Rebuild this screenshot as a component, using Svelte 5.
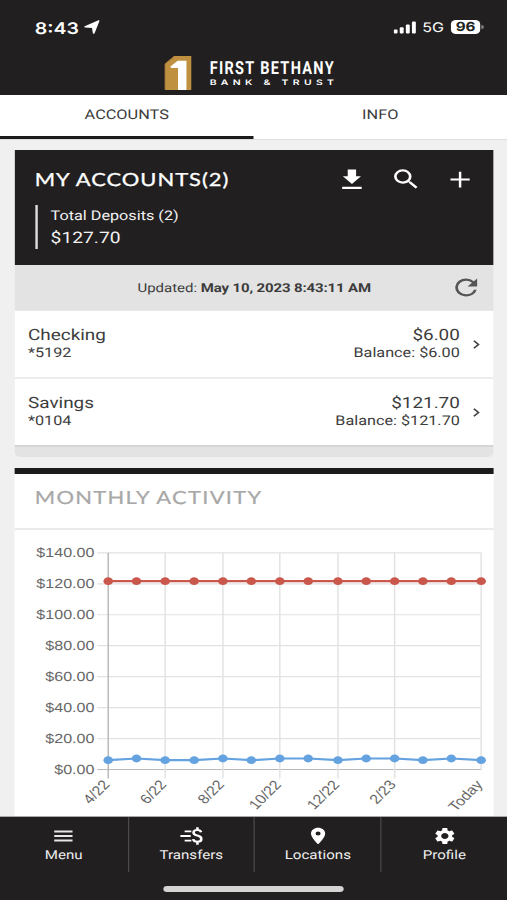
<script>
  const tabs = ['ACCOUNTS', 'INFO'];
  const accounts = [
    { name: 'Checking', mask: '*5192', amount: '$6.00' },
    { name: 'Savings', mask: '*0104', amount: '$121.70' }
  ];

  // Chart geometry, in the units of the chart's viewBox.
  const left = 76.8;
  const right = 382.8;
  const base = 239.5;
  const step = 30.95;
  const ticks = [0, 20, 40, 60, 80, 100, 120, 140];
  const xs = [76.8, 100, 123.5, 147.3, 170.9, 194.2, 217.6, 240.9, 265.3, 288.5, 311.8, 335, 358.3, 382.8];
  const labels = [
    [0, '4/22'], [2, '6/22'], [4, '8/22'], [6, '10/22'], [8, '12/22'], [10, '2/23'], [13, 'Today']
  ];
  const y = (v) => base - (v / 20) * step;
  const savings = xs.map(() => 121.7);
  const checking = [6, 7.1, 6, 6, 7.1, 6, 7.1, 7.1, 6, 7.1, 7.1, 6, 7.1, 6];
  const line = (vals) => vals.map((v, i) => `${xs[i]},${y(v)}`).join(' ');
</script>

<div class="app">
  <header>
    <div class="status">
      <span class="time">8:43</span>
      <svg class="arrow" width="12.8" height="14" viewBox="0 0 12.8 14"><path d="M.5 6.300 11.800.3Q12.900 0 12.600 1.100L8.600 13.200Q7.900 14.200 7.200 13.200L6.500 7.900.8 7.600Q-.3 7.100.5 6.300Z" fill="#fff" /></svg>
      <span class="grow"></span>
      <svg width="19" height="13" viewBox="0 0 19 13" fill="#fff">
        <rect x="0" y="8.5" width="3.2" height="4" rx="1" /><rect x="5" y="6.3" width="3.2" height="6.2" rx="1" /><rect x="10" y="3.5" width="3.2" height="9" rx="1" /><rect x="15" y=".6" width="3.2" height="11.9" rx="1" />
      </svg>
      <span class="net">5G</span>
      <span class="battery">96</span>
      <span class="nub"></span>
    </div>
    <div class="brand">
      <svg width="22.4" height="34" viewBox="0 0 27 34" preserveAspectRatio="none">
        <path d="M9.500 0H27V34H0V8Z" fill="#bf9040" />
        <path d="M5.800 10.500 13 4.800h8.700V34h-8.400V12H6.500Z" fill="#fff" />
        <path d="M9.500.3 .4 8V34" fill="none" stroke="#8d6a35" stroke-width=".8" />
      </svg>
      <div class="words">
        <span class="bethany">FIRST BETHANY</span>
        <span class="trust">BANK &amp; TRUST</span>
      </div>
    </div>
  </header>

  <nav class="tabs">
    {#each tabs as tab, i}
      <div class="tab" class:active={i === 0}>{tab}</div>
    {/each}
  </nav>

  <main>
    <section class="card">
      <div class="summary">
        <div class="head">
          <h2>MY ACCOUNTS(2)</h2>
          <div class="tools">
            <svg width="27.5" height="27.5" viewBox="0 0 24 24"><path d="M5 20h14v-1.8H5V20zM18.5 9H15V3H9v6H5.5l6.5 6.8z" /></svg>
            <svg width="26.5" height="26.5" viewBox="0 0 24 24"><path d="M15.5 14h-.79l-.28-.27A6.471 6.471 0 0 0 16 9.500 6.500 6.500 0 1 0 9.500 16c1.610 0 3.090-.59 4.230-1.570l.27.28v.79l5 4.990L20.490 19l-4.990-5zm-6 0C7.010 14 5 11.990 5 9.500S7.010 5 9.500 5 14 7.010 14 9.500 11.990 14 9.500 14z" /></svg>
            <svg width="27" height="27" viewBox="0 0 24 24"><path d="M19 12.900h-6.100V19h-1.800v-6.100H5v-1.800h6.100V5h1.800v6.100H19z" /></svg>
          </div>
        </div>
        <div class="total">
          <span class="small">Total Deposits (2)</span>
          <span class="sum">$127.70</span>
        </div>
      </div>
      <div class="updated">
        <span>Updated: <b>May 10, 2023 8:43:11 AM</b></span>
        <svg width="27" height="27" viewBox="0 0 24 24"><path d="M17.650 6.350A7.958 7.958 0 0 0 12 4a8 8 0 1 0 7.730 10h-2.080A5.990 5.990 0 0 1 12 18a6 6 0 1 1 0-12c1.660 0 3.140.69 4.220 1.780L13 11h7V4l-2.350 2.350z" /></svg>
      </div>
      {#each accounts as a}
        <div class="row">
          <div class="col">
            <span class="big">{a.name}</span>
            <span class="small">{a.mask}</span>
          </div>
          <div class="col end">
            <span class="big">{a.amount}</span>
            <span class="small">Balance: {a.amount}</span>
          </div>
          <svg width="6" height="9" viewBox="0 0 6 9"><path d="M.8.8 4.600 4.500.8 8.200" fill="none" stroke="#444" stroke-width="1.500" /></svg>
        </div>
      {/each}
      <div class="foot"></div>
    </section>

    <section class="activity">
      <h3>MONTHLY ACTIVITY</h3>
      <svg class="chart" width="394" height="286" viewBox="0 0 394 286">
        {#each ticks as t}
          <line x1={left - 9} x2={right} y1={y(t)} y2={y(t)} class={t === 0 ? 'axis' : 'grid'} />
          <text x="65.500" y={y(t) + 4.400} text-anchor="end">${t}.00</text>
        {/each}
        {#each labels as [i, text]}
          <line x1={xs[i]} x2={xs[i]} y1={y(140)} y2={i === 13 ? base : base + 9} class={i === 0 ? 'axis' : 'grid'} />
          <text transform="translate({xs[i] + 1.800} {base + 15.500}) rotate(-50)" text-anchor="end">{text}</text>
        {/each}
        {#each [[savings, '#c9574b'], [checking, '#64a2e0']] as [vals, color]}
          <polyline points={line(vals)} fill="none" stroke={color} stroke-width="2.200" />
          {#each vals as v, i}
            <circle cx={xs[i]} cy={y(v)} r="3.900" fill={color} />
          {/each}
        {/each}
      </svg>
    </section>
  </main>

  <footer>
    <div class="items">
      <div class="item">
        <svg width="24" height="20" viewBox="0 0 24 20"><path d="M4.500 5.500h15M4.500 10h15M4.500 14.500h15" stroke="#e8e6e6" stroke-width="1.900" /></svg>
        <span>Menu</span>
      </div>
      <div class="item">
        <svg width="24" height="20" viewBox="0 0 24 20" fill="none" stroke="#fff">
          <path d="M6.500 5.400h5.500M3 10h8.500M6.500 14.600h5.500" stroke-width="1.800" />
          <path d="M20 6.300Q19.500 4 16.800 4 13.800 4 13.800 6.500 13.800 8.800 16.900 9.600 20.200 10.400 20.200 13 20.200 15.800 17 15.800 13.900 15.800 13.500 13.100M17 1.200V4M17 15.800v2.900" stroke-width="2.100" />
        </svg>
        <span>Transfers</span>
      </div>
      <div class="item">
        <svg width="20" height="20" viewBox="0 0 24 24" fill="#fff"><path d="M12 2C8.130 2 5 5.130 5 9c0 5.250 7 13 7 13s7-7.750 7-13c0-3.870-3.130-7-7-7zm0 9.500a2.500 2.500 0 0 1 0-5 2.500 2.500 0 0 1 0 5z" /></svg>
        <span>Locations</span>
      </div>
      <div class="item">
        <svg width="20" height="20" viewBox="0 0 24 24" fill="#fff"><path d="M19.140 12.940c.04-.3.060-.61.060-.94 0-.32-.02-.64-.07-.94l2.030-1.580c.18-.14.23-.41.12-.61l-1.920-3.320c-.12-.22-.37-.29-.59-.22l-2.390.96c-.5-.38-1.030-.7-1.620-.94l-.36-2.540c-.04-.24-.24-.41-.48-.41h-3.840c-.24 0-.43.17-.47.41l-.36 2.540c-.59.24-1.130.57-1.620.94l-2.390-.96c-.22-.08-.47 0-.59.22L2.740 8.870c-.12.21-.08.47.12.61l2.030 1.580c-.05.3-.09.63-.09.94s.02.64.07.94l-2.030 1.580c-.18.14-.23.41-.12.61l1.920 3.320c.12.22.37.29.59.22l2.390-.96c.5.38 1.030.7 1.620.94l.36 2.540c.05.24.24.41.48.41h3.840c.24 0 .44-.17.47-.41l.36-2.540c.59-.24 1.130-.56 1.620-.94l2.390.96c.22.08.47 0 .59-.22l1.920-3.320c.12-.22.07-.47-.12-.61l-2.010-1.580zM12 15.600c-1.980 0-3.600-1.620-3.600-3.600s1.620-3.600 3.600-3.600 3.600 1.620 3.600 3.600-1.620 3.600-3.600 3.600z" /></svg>
        <span>Profile</span>
      </div>
    </div>
    <div class="home"></div>
  </footer>
</div>

<style>
  :global(body) { overflow: hidden; background: #f0f0f0; }
  /* Laid out 416 units wide, then widened to fill the 507px screen. */
  .app {
    width: 416px; height: 900px; display: flex; flex-direction: column;
    transform: scaleX(1.21875); transform-origin: 0 0;
    background: #f0f0f0; color: #3c3c3c; font-family: Roboto, sans-serif; overflow: hidden;
    text-rendering: geometricPrecision;
  }
  svg { display: block; flex: none; }
  header { height: 95px; flex: none; background: #221f20; color: #fff; }
  .status { height: 54px; display: flex; align-items: center; padding: 0 19.500px 0 28.500px; box-sizing: border-box; font-family: Inter, sans-serif; }
  .time { font-size: 16px; font-weight: 600; padding-top: 1px; }
  .arrow { margin-left: 4.500px; }
  .grow { flex: 1; }
  .net { font-size: 13.200px; font-weight: 400; margin: 1px 6.500px 0 4.500px; width: 17px; }
  .battery { width: 24px; height: 14px; border-radius: 4px; background: #fff; color: #221f20; font-size: 12.500px; line-height: 15.500px; font-weight: 700; text-align: center; }
  .nub { width: 1.500px; height: 4px; margin-left: 1px; border-radius: 0 2px 2px 0; background: #8a8888; }
  .brand { display: flex; padding: 2px 0 0 134.500px; }
  .words { display: flex; flex-direction: column; margin-left: 14.700px; white-space: nowrap; width: 104px; }
  .bethany { font-size: 18px; line-height: 18px; font-weight: 700; letter-spacing: 1.650px; transform: scaleX(.66); transform-origin: 0 0; margin-top: 3.500px; }
  .trust { font-size: 7.500px; line-height: 8px; font-weight: 600; font-family: Inter, sans-serif; letter-spacing: 3.100px; margin-top: 1px; transform: scaleX(1.140); transform-origin: 0 0; }
  .tabs { height: 44px; flex: none; display: flex; background: #fff; border-bottom: 1px solid #dedede; }
  .tab { width: 208px; text-align: center; font-size: 13.400px; line-height: 42px; border-bottom: 3px solid transparent; height: 41px; }
  .active { border-color: #1b1b1b; }
  main { flex: 1; padding: 10px 10.700px 0 11.500px; min-height: 0; }
  .card { border-radius: 0 0 5px 5px; overflow: hidden; height: 307px; }
  .summary { height: 115px; background: #221f20; color: #f2f2f2; box-sizing: border-box; padding: 14.500px 14px 0 17px; }
  .head { display: flex; justify-content: space-between; height: 30px; align-items: center; }
  h2 { margin: 0; font: 400 18px/28px Lato, sans-serif; height: 30px; letter-spacing: .8px; -webkit-text-stroke: .3px #fff; color: #fff; white-space: nowrap; }
  .tools { display: flex; align-items: center; gap: 17.500px; fill: #fff; }
  .total { border-left: 2.400px solid #ddd; height: 44px; margin-top: 10.500px; padding-left: 11px; display: flex; flex-direction: column; }
  .small { font-size: 13.300px; line-height: 20px; }
  .total .small { line-height: 23px; }
  .sum { font-size: 15.800px; line-height: 20px; }
  .updated { height: 45px; background: #e3e3e3; display: flex; align-items: center; font-size: 12.300px; box-sizing: border-box; padding: 0 9px 0 101.300px; justify-content: space-between; white-space: nowrap; }
  .updated span { padding-top: 3px; }
  .updated b { font-weight: 700; letter-spacing: -.12px; }
  .updated svg { fill: #555; }
  .row { height: 67px; box-sizing: border-box; border-top: 1px solid #e8e8e8; background: #fff; display: flex; align-items: center; padding: 1px 11px 0 11.500px; }
  .row + .row { border-top: 2px solid #ececec; height: 68px; padding-top: 0; }
  .col { display: flex; flex-direction: column; flex: 1; padding-top: 2px; }
  .row + .row .col { padding-top: 3px; }
  .end { text-align: right; margin-right: 11px; }
  .big { font-size: 15.500px; line-height: 17px; }
  .foot { height: 12px; background: #e3e3e3; border-top: 2px solid #d6d6d6; box-sizing: border-box; }
  .activity { margin-top: 11px; border-top: 6px solid #1b1b1b; background: #fff; }
  h3 { margin: 0; height: 56px; box-sizing: border-box; border-bottom: 2px solid #ebebeb; padding-left: 17px; font: 400 18px/46px Lato, sans-serif; color: #a8a8a8; letter-spacing: 1.060px; -webkit-text-stroke: .2px #a8a8a8; }
  .chart text { font: 13.200px "Liberation Sans", Arial, sans-serif; fill: #666; }
  .grid { stroke: #e2e2e2; stroke-width: 1.200; }
  .axis { stroke: #b8b8b8; stroke-width: 1.200; }
  footer { height: 84px; flex: none; box-sizing: border-box; border-top: 1px solid #aaa; background: #221f20; color: #eee; }
  .items { display: flex; height: 55px; }
  .item { flex: 1; border-left: 1px solid #4d4a4b; display: flex; flex-direction: column; align-items: center; font-size: 12.400px; padding-top: 9px; }
  .item:first-child { border-left: 0; flex: 0 0 104.600px; }
  .item span { line-height: 20px; }
  .home { width: 148px; height: 6px; border-radius: 3px; background: #d6d3d3; margin: 14px auto 0; }
</style>
